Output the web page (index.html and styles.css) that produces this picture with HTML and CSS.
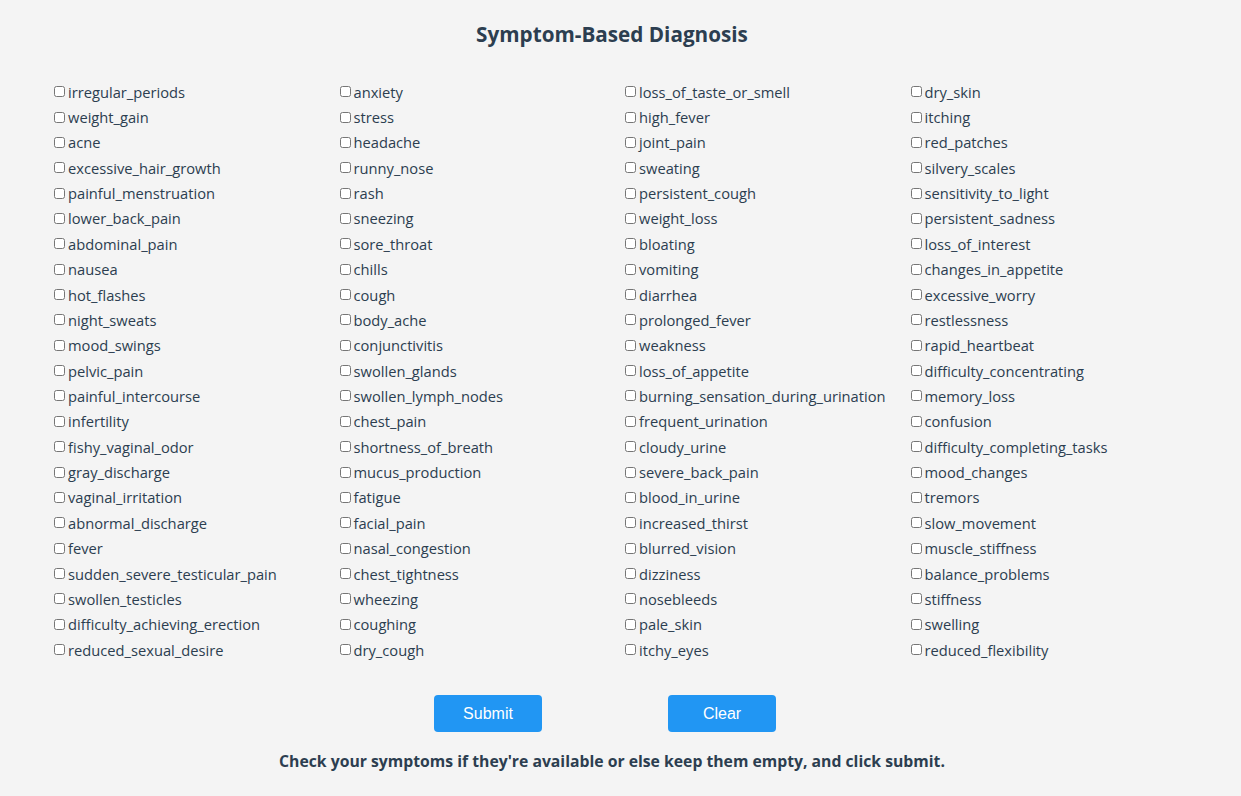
FILE: index.html
```html
<!DOCTYPE html>
<html>
<head>
<meta charset="utf-8">
<link rel="stylesheet" href="styles.css">
</head>
<body>
<div class="page">
  <h1 class="title">Symptom-Based Diagnosis</h1>
  <form class="form">
    <div class="grid">
      <div class="col">
        <label class="item"><input type="checkbox"><span>irregular_periods</span></label>
        <label class="item"><input type="checkbox"><span>weight_gain</span></label>
        <label class="item"><input type="checkbox"><span>acne</span></label>
        <label class="item"><input type="checkbox"><span>excessive_hair_growth</span></label>
        <label class="item"><input type="checkbox"><span>painful_menstruation</span></label>
        <label class="item"><input type="checkbox"><span>lower_back_pain</span></label>
        <label class="item"><input type="checkbox"><span>abdominal_pain</span></label>
        <label class="item"><input type="checkbox"><span>nausea</span></label>
        <label class="item"><input type="checkbox"><span>hot_flashes</span></label>
        <label class="item"><input type="checkbox"><span>night_sweats</span></label>
        <label class="item"><input type="checkbox"><span>mood_swings</span></label>
        <label class="item"><input type="checkbox"><span>pelvic_pain</span></label>
        <label class="item"><input type="checkbox"><span>painful_intercourse</span></label>
        <label class="item"><input type="checkbox"><span>infertility</span></label>
        <label class="item"><input type="checkbox"><span>fishy_vaginal_odor</span></label>
        <label class="item"><input type="checkbox"><span>gray_discharge</span></label>
        <label class="item"><input type="checkbox"><span>vaginal_irritation</span></label>
        <label class="item"><input type="checkbox"><span>abnormal_discharge</span></label>
        <label class="item"><input type="checkbox"><span>fever</span></label>
        <label class="item"><input type="checkbox"><span>sudden_severe_testicular_pain</span></label>
        <label class="item"><input type="checkbox"><span>swollen_testicles</span></label>
        <label class="item"><input type="checkbox"><span>difficulty_achieving_erection</span></label>
        <label class="item"><input type="checkbox"><span>reduced_sexual_desire</span></label>
      </div>
      <div class="col">
        <label class="item"><input type="checkbox"><span>anxiety</span></label>
        <label class="item"><input type="checkbox"><span>stress</span></label>
        <label class="item"><input type="checkbox"><span>headache</span></label>
        <label class="item"><input type="checkbox"><span>runny_nose</span></label>
        <label class="item"><input type="checkbox"><span>rash</span></label>
        <label class="item"><input type="checkbox"><span>sneezing</span></label>
        <label class="item"><input type="checkbox"><span>sore_throat</span></label>
        <label class="item"><input type="checkbox"><span>chills</span></label>
        <label class="item"><input type="checkbox"><span>cough</span></label>
        <label class="item"><input type="checkbox"><span>body_ache</span></label>
        <label class="item"><input type="checkbox"><span>conjunctivitis</span></label>
        <label class="item"><input type="checkbox"><span>swollen_glands</span></label>
        <label class="item"><input type="checkbox"><span>swollen_lymph_nodes</span></label>
        <label class="item"><input type="checkbox"><span>chest_pain</span></label>
        <label class="item"><input type="checkbox"><span>shortness_of_breath</span></label>
        <label class="item"><input type="checkbox"><span>mucus_production</span></label>
        <label class="item"><input type="checkbox"><span>fatigue</span></label>
        <label class="item"><input type="checkbox"><span>facial_pain</span></label>
        <label class="item"><input type="checkbox"><span>nasal_congestion</span></label>
        <label class="item"><input type="checkbox"><span>chest_tightness</span></label>
        <label class="item"><input type="checkbox"><span>wheezing</span></label>
        <label class="item"><input type="checkbox"><span>coughing</span></label>
        <label class="item"><input type="checkbox"><span>dry_cough</span></label>
      </div>
      <div class="col">
        <label class="item"><input type="checkbox"><span>loss_of_taste_or_smell</span></label>
        <label class="item"><input type="checkbox"><span>high_fever</span></label>
        <label class="item"><input type="checkbox"><span>joint_pain</span></label>
        <label class="item"><input type="checkbox"><span>sweating</span></label>
        <label class="item"><input type="checkbox"><span>persistent_cough</span></label>
        <label class="item"><input type="checkbox"><span>weight_loss</span></label>
        <label class="item"><input type="checkbox"><span>bloating</span></label>
        <label class="item"><input type="checkbox"><span>vomiting</span></label>
        <label class="item"><input type="checkbox"><span>diarrhea</span></label>
        <label class="item"><input type="checkbox"><span>prolonged_fever</span></label>
        <label class="item"><input type="checkbox"><span>weakness</span></label>
        <label class="item"><input type="checkbox"><span>loss_of_appetite</span></label>
        <label class="item"><input type="checkbox"><span>burning_sensation_during_urination</span></label>
        <label class="item"><input type="checkbox"><span>frequent_urination</span></label>
        <label class="item"><input type="checkbox"><span>cloudy_urine</span></label>
        <label class="item"><input type="checkbox"><span>severe_back_pain</span></label>
        <label class="item"><input type="checkbox"><span>blood_in_urine</span></label>
        <label class="item"><input type="checkbox"><span>increased_thirst</span></label>
        <label class="item"><input type="checkbox"><span>blurred_vision</span></label>
        <label class="item"><input type="checkbox"><span>dizziness</span></label>
        <label class="item"><input type="checkbox"><span>nosebleeds</span></label>
        <label class="item"><input type="checkbox"><span>pale_skin</span></label>
        <label class="item"><input type="checkbox"><span>itchy_eyes</span></label>
      </div>
      <div class="col">
        <label class="item"><input type="checkbox"><span>dry_skin</span></label>
        <label class="item"><input type="checkbox"><span>itching</span></label>
        <label class="item"><input type="checkbox"><span>red_patches</span></label>
        <label class="item"><input type="checkbox"><span>silvery_scales</span></label>
        <label class="item"><input type="checkbox"><span>sensitivity_to_light</span></label>
        <label class="item"><input type="checkbox"><span>persistent_sadness</span></label>
        <label class="item"><input type="checkbox"><span>loss_of_interest</span></label>
        <label class="item"><input type="checkbox"><span>changes_in_appetite</span></label>
        <label class="item"><input type="checkbox"><span>excessive_worry</span></label>
        <label class="item"><input type="checkbox"><span>restlessness</span></label>
        <label class="item"><input type="checkbox"><span>rapid_heartbeat</span></label>
        <label class="item"><input type="checkbox"><span>difficulty_concentrating</span></label>
        <label class="item"><input type="checkbox"><span>memory_loss</span></label>
        <label class="item"><input type="checkbox"><span>confusion</span></label>
        <label class="item"><input type="checkbox"><span>difficulty_completing_tasks</span></label>
        <label class="item"><input type="checkbox"><span>mood_changes</span></label>
        <label class="item"><input type="checkbox"><span>tremors</span></label>
        <label class="item"><input type="checkbox"><span>slow_movement</span></label>
        <label class="item"><input type="checkbox"><span>muscle_stiffness</span></label>
        <label class="item"><input type="checkbox"><span>balance_problems</span></label>
        <label class="item"><input type="checkbox"><span>stiffness</span></label>
        <label class="item"><input type="checkbox"><span>swelling</span></label>
        <label class="item"><input type="checkbox"><span>reduced_flexibility</span></label>
      </div>
    </div>
    <div class="actions">
      <button type="button" class="btn">Submit</button>
      <button type="button" class="btn">Clear</button>
    </div>
  </form>
  <p class="note">Check your symptoms if they're available or else keep them empty, and click submit.</p>
</div>
</body>
</html>
```

FILE: styles.css
```css
html, body {
  margin: 0;
  padding: 0;
  background: #f4f4f4;
}
body {
  font-family: "Open Sans", "Noto Sans", sans-serif;
  color: #2c3e50;
}
.page {
  padding: 20px 17px 0 0;
}
.title {
  margin: 0;
  text-align: center;
  font-size: 20.7px;
  font-weight: 700;
  line-height: 28px;
}
.form {
  margin-top: 31px;
  padding: 0 32px 0 50px;
}
.grid {
  display: grid;
  grid-template-columns: repeat(4, 1fr);
}
.col {
  display: flex;
  flex-direction: column;
}
.item {
  display: flex;
  align-items: center;
  height: 25.36px;
  font-size: 14.7px;
  line-height: 20px;
}
.item input {
  width: 11px;
  height: 11px;
  margin: 0 3px 0 4px;
}
.actions {
  display: flex;
  justify-content: center;
  gap: 126px;
  margin-top: 33px;
  padding-right: 32px;
}
.btn {
  width: 108px;
  height: 37px;
  background: #2196f3;
  color: #ffffff;
  border: none;
  border-radius: 4px;
  font-family: "Liberation Sans", Arial, sans-serif;
  font-size: 16px;
}
.note {
  margin: 18px 0 0;
  text-align: center;
  font-size: 15.75px;
  font-weight: 700;
}
```
